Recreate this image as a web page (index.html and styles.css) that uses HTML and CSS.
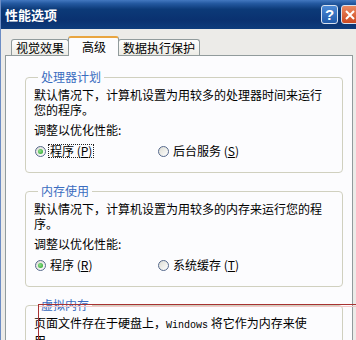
FILE: index.html
```html
<!DOCTYPE html>
<html lang="zh-CN">
<head>
    <meta charset="UTF-8">
    <title>性能选项</title>
    <link rel="stylesheet" href="styles.css">
</head>
<body>
	<div class="window">
		<div class="titlebar">
			<span class="title">性能选项</span>
			<div class="title-buttons">
				<span class="tbtn help">?</span>
				<span class="tbtn close">
					<svg width="10" height="10" viewBox="0 0 10 10"><path d="M1 1L9 9M9 1L1 9" stroke="#fff" stroke-width="2"/></svg>
				</span>
			</div>
		</div>

		<div class="tabs">
			<div class="tab">视觉效果</div>
			<div class="tab active">高级</div>
			<div class="tab">数据执行保护</div>
		</div>

		<div class="page">
			<fieldset class="group">
				<legend>处理器计划</legend>
				<p class="desc">默认情况下，计算机设置为用较多的处理器时间来运行<br>您的程序。</p>
				<p class="label">调整以优化性能:</p>
				<div class="options">
					<label class="option"><span class="radio checked"></span><span class="focus">程序 (<u>P</u>)</span></label>
					<label class="option"><span class="radio"></span><span class="caption">后台服务 (<u>S</u>)</span></label>
				</div>
			</fieldset>

			<fieldset class="group">
				<legend>内存使用</legend>
				<p class="desc">默认情况下，计算机设置为用较多的内存来运行您的程<br>序。</p>
				<p class="label">调整以优化性能:</p>
				<div class="options">
					<label class="option"><span class="radio checked"></span><span class="caption">程序 (<u>R</u>)</span></label>
					<label class="option"><span class="radio"></span><span class="caption">系统缓存 (<u>T</u>)</span></label>
				</div>
			</fieldset>

			<fieldset class="group">
				<legend>虚拟内存</legend>
				<p class="desc">页面文件存在于硬盘上，<span class="mono">Windows</span> 将它作为内存来使<br>用。</p>
			</fieldset>
		</div>

		<!-- red marks drawn over the screenshot -->
		<div class="mark-h"></div>
		<div class="mark-v"></div>
	</div>
</body>
</html>
```

FILE: styles.css
```css
body {
	margin: 0;
	font-family: "Noto Sans CJK SC", sans-serif;
	font-size: 12px;
	color: #000;
}

.window {
	width: 356px;
	height: 340px;
	overflow: hidden;
	position: relative;
	box-sizing: border-box;
	border-left: 1px solid #6d8dc4;
	background: #ecebe8;
}

.titlebar {
	height: 29px;
	display: flex;
	align-items: center;
	justify-content: space-between;
	padding-left: 4px;
	background: linear-gradient(to bottom, #4378c0 0%, #2459a0 12%, #0c3a78 32%, #0a3170 70%, #0e3c7c 100%);
	color: #fff;
}

.title {
	font-weight: bold;
	font-size: 13px;
	line-height: 16px;
}

.title-buttons {
	display: flex;
	gap: 3px;
	margin-right: -3px;
}

.tbtn {
	width: 17px;
	height: 19px;
	box-sizing: border-box;
	border: 1px solid #d8e2f0;
	border-radius: 3px;
	display: flex;
	align-items: center;
	justify-content: center;
}

.help {
	background: linear-gradient(to bottom, #4d8ad6, #1f5aaa);
	font: bold 15px "Liberation Sans", sans-serif;
	color: #fff;
}

.close {
	width: 18px;
	background: linear-gradient(to bottom, #ec8a62, #cc4820);
}

.tabs {
	display: flex;
	align-items: flex-end;
	padding: 7px 0 0 10px;
	margin-bottom: -1px;
	position: relative;
	z-index: 1;
}

.tab {
	height: 16px;
	line-height: 15px;
	padding: 0 4px;
	margin-bottom: 1px;
	box-sizing: border-box;
	border: 1px solid #919b9c;
	border-bottom: none;
	border-radius: 3px 3px 0 0;
	background: linear-gradient(to bottom, #ffffff, #ecebe5);
	white-space: nowrap;
}

.tab + .tab {
	margin-left: -1px;
}

.tab.active {
	height: 20px;
	line-height: 17px;
	padding: 0 12px 0 13px;
	margin-bottom: 0;
	border-top: 2px solid #e9a540;
	background: #fcfcfe;
}

.page {
	margin-left: 4px;
	width: 348px;
	height: 300px;
	box-sizing: border-box;
	border: 1px solid #919b9c;
	background: #fcfcfe;
	padding: 14px 9px 0 19px;
}

.group {
	margin: 0 0 11px;
	padding: 3px 14px 14px 8px;
	border: 1px solid #d0d0bf;
	border-radius: 4px;
	min-width: 0;
}

.group legend {
	padding: 0 3px;
	margin-left: 4px;
	line-height: 14px;
	color: #3a6cc0;
}

.desc {
	margin: 0;
	line-height: 15px;
	white-space: nowrap;
}

.mono {
	font-family: "Liberation Mono", monospace;
	font-size: 10px;
}

.label {
	margin: 5px 0 0;
	line-height: 15px;
}

.options {
	display: flex;
	align-items: center;
	height: 14px;
	margin-top: 7px;
}

.option {
	display: flex;
	align-items: center;
	width: 123px;
	line-height: 12px;
	white-space: nowrap;
}

.radio {
	width: 11px;
	height: 11px;
	margin: 0 2px 0 1px;
	box-sizing: border-box;
	border: 1px solid #56698c;
	border-radius: 50%;
	background: linear-gradient(135deg, #dcdcd4, #ffffff);
	position: relative;
}

.radio.checked::after {
	content: "";
	position: absolute;
	left: 2px;
	top: 2px;
	width: 5px;
	height: 5px;
	border-radius: 50%;
	background: radial-gradient(circle at 40% 40%, #8fe08f, #21a121);
}

.focus {
	border: 1px dotted #222;
	padding: 0 1px;
}

.caption {
	padding: 0 2px;
}

.mark-h {
	position: absolute;
	left: 37px;
	right: 0;
	top: 304px;
	height: 1px;
	background: #a83232;
	box-shadow: 0 2px 0 #f3c8c8;
}

.mark-v {
	position: absolute;
	left: 37px;
	top: 304px;
	bottom: 0;
	width: 1px;
	background: #a83232;
}
```
